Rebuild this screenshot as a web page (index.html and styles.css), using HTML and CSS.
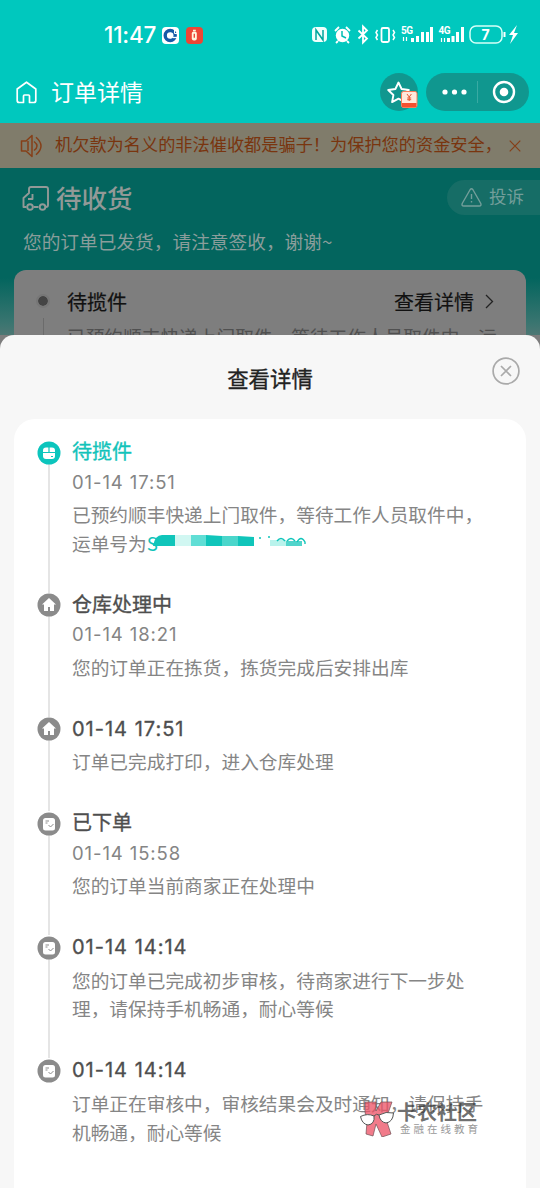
FILE: index.html
```html
<!DOCTYPE html>
<html lang="zh-CN">
<head>
<meta charset="utf-8">
<title>订单详情</title>
<link rel="stylesheet" href="styles.css">
</head>
<body>
<div class="screen">
  <header class="header">
    <div class="status">
      <span class="clock">11:47</span>
      <svg class="app-icon" width="17" height="17" viewBox="0 0 17 17"><rect width="17" height="17" rx="4" fill="#fff"/><circle cx="8.2" cy="8.5" r="5" fill="none" stroke="#175aa7" stroke-width="3.4"/><path d="M11 10.500h5" stroke="#fff" stroke-width="1.300"/><path d="M12.500 3v3.500H16" fill="none" stroke="#fff"/><path d="M8.200 5.500 11.200 8.500 8.200 11.500 5.200 8.500z" fill="#fff"/></svg>
      <svg class="app-icon" width="17" height="17" viewBox="0 0 17 17"><rect width="17" height="17" rx="4" fill="#ed4635"/><rect x="5.8" y="4.500" width="5" height="9" rx="2" fill="#fff5df"/><path d="M7 3.500h2.800" stroke="#fff5df" stroke-width="1.500"/><path d="M8.300 6.800v4" stroke="#ed4635" stroke-width="1.400"/></svg>
      <svg class="system-icons" width="210" height="24" viewBox="310 23 210 24" fill="none" stroke="#fff" stroke-width="1.800">
        <rect x="312" y="27" width="15" height="15" rx="4" fill="#effffc" stroke="none"/><path d="M316 40V30l7 10V30" stroke="#00a79d" stroke-width="1.500"/>
        <circle cx="342.500" cy="35.500" r="6.700" fill="#fff" stroke="none"/><path d="m335 31 4-4m7 0 4 4M338 41l-2 2m11-2 2 2"/><path d="M342 31v5l4 2" stroke="#00bdb3" stroke-width="1.500"/>
        <path d="m358.500 30.500 8.500 8-4 4V26.500l4 4-8.500 8" stroke-width="1.800"/>
        <rect x="381.500" y="28" width="7.500" height="14" rx="1.500"/><path d="m377.500 30-1.500 2.500 1.500 2.500-1.500 2.500 1.500 2.500m15.500-10 1.500 2.500-1.500 2.500 1.500 2.500-1.500 2.500" stroke-width="1.500"/>
        <path d="M403.500 37v4m3-4v4" stroke-width="1.200"/><path d="M412.500 38v4m5-6v6m5-10v10m5-10v10m4-15v15" stroke-width="3"/>
        <path d="M441.500 38v4m3-4v4" stroke-width="1.200"/><path d="M448.500 38v4m4.500-6v6m4.500-10v10m5-15v15" stroke-width="3"/>
        <rect x="470" y="26" width="32" height="17" rx="6" stroke="#d5fff8" stroke-width="1.500"/><path d="M504.500 32v5" stroke-width="2"/><path d="m517 25-8 10h4l-3 9 8-11h-4z" fill="#fff" stroke="none"/>
        <text x="401" y="34" class="signal">5G</text><text x="438.500" y="34" class="signal">4G</text><text x="481.500" y="40" class="battery">7</text>
      </svg>
    </div>
    <nav class="nav">
      <svg width="21" height="23" viewBox="0 0 21 23" fill="none" stroke="#fff" stroke-width="1.700" stroke-linejoin="round"><path d="M1.200 8 10.500 1.200 19.800 8v11.500q0 2-2 2H13.500V15q0-1-1-1h-4q-1 0-1 1v6.500H3.200q-2 0-2-2z"/></svg>
      <h1>订单详情</h1>
      <div class="favorite">
        <svg width="38" height="38" viewBox="380 73 38 38"><path d="m398.500 82.500 3.100 6.500 7.200 1-5.200 5 1.300 7.100-6.400-3.400-6.400 3.400 1.300-7.100-5.200-5 7.200-1z" fill="none" stroke="#fff" stroke-width="1.900" stroke-linejoin="round"/><rect x="401.500" y="91.500" width="15.500" height="16" rx="2" fill="#ffe9dc" stroke="#fa7c58"/><path d="M402 103h14.500v4H402z" fill="#f5502f"/><path d="m407 94 2.200 3 2.200-3m-2.200 3v4m-2-3h4m-4 1.700h4" fill="none" stroke="#e35632"/></svg>
      </div>
      <div class="capsule">
        <svg width="103" height="38" viewBox="0 0 103 38" fill="#fff"><circle cx="19" cy="19" r="2.600"/><circle cx="28.500" cy="19" r="2.600"/><circle cx="38" cy="19" r="2.600"/><path d="M51.500 8v22" stroke="#39aaa3"/><circle cx="78" cy="19" r="10" fill="none" stroke="#fff" stroke-width="2.400"/><circle cx="78" cy="19" r="4.300"/></svg>
      </div>
    </nav>
  </header>
  <div class="notice">
    <svg width="24" height="24" viewBox="0 0 24 24" fill="none" stroke="#853f18" stroke-width="1.500" stroke-linejoin="round"><path d="M12 1.500v21L6 17H1.500V7H6zM8 7v10M14 7.500q6 4.500 0 9M16 3.200q10 8.800 0 17.600"/></svg>
    <div class="notice-text">机欠款为名义的非法催收都是骗子！为保护您的资金安全，</div>
    <svg class="notice-close" width="12" height="12" viewBox="0 0 12 12"><path d="m.7.7 10.600 10.600M11.300.7.700 11.300" stroke="#853f18" stroke-width="1.200"/></svg>
  </div>
  <section class="hero">
    <div class="state">
      <svg width="28" height="26" viewBox="0 0 28 26" fill="none" stroke="#929997" stroke-width="1.900" stroke-linejoin="round"><path d="M4.500 22H1.500v-9L7 8V4q0-2 2-2h15q2 0 2 2v16q0 2-2 2M11.500 22h5M10.500 9v5H6"/><circle cx="8" cy="22" r="2.800"/><circle cx="20.500" cy="22" r="2.800"/></svg>
      <h2>待收货</h2>
      <div class="complaint"><svg width="21" height="19" viewBox="0 0 21 19" fill="none" stroke="#739e9a" stroke-width="1.400" stroke-linejoin="round"><path d="M9.200 1.500Q10.500 0 11.800 1.500l8 14q.8 2.500-1.500 2.500H2.700Q.4 18 1.200 15.500zM10.500 6v5m0 2v1.500"/></svg><span>投诉</span></div>
    </div>
    <p class="ship-note">您的订单已发货，请注意签收，谢谢~</p>
    <div class="summary">
      <div class="summary-head"><i class="dot"></i><b>待揽件</b><span>查看详情</span><svg width="9" height="15" viewBox="0 0 9 15"><path d="m1 1 6.500 6.500L1 14" fill="none" stroke="#222" stroke-width="1.300"/></svg></div>
      <p>已预约顺丰快递上门取件，等待工作人员取件中，运</p>
    </div>
  </section>
  <main class="sheet">
    <div class="sheet-head"><h2>查看详情</h2>
      <svg class="close" width="28" height="28" viewBox="0 0 28 28" fill="none" stroke="#aaa" stroke-width="1.700"><circle cx="14" cy="14" r="12.900"/><path d="m9 9 10 10M19 9 9 19"/></svg>
    </div>
    <div class="timeline">
      <article class="event current">
        <svg class="marker" viewBox="0 0 24 24"><circle cx="12" cy="12" r="11.500" fill="#0cc5bd"/><rect x="6" y="6.500" width="12" height="11.500" rx="3" fill="#fff"/><path d="M5 11.500h14M12 6v5.500m2 4h2" stroke="#0cc5bd" stroke-width="1.200"/></svg>
        <h3>待揽件</h3><time>01-14 17:51</time>
        <p>已预约顺丰快递上门取件，等待工作人员取件中，<br>运单号为<span class="tracking">S<svg width="160" height="20" viewBox="150 533 160 20"><path d="M153 546q2-11 9-11h13v11z" fill="#10c5ba"/><path d="M175 535h16v11h-16z" fill="#d1f7f2"/><path d="M191 535h15v11h-15z" fill="#60ded5"/><path d="m206 535 16 1v10h-16z" fill="#10c5ba"/><path d="M222 536h16v10h-16z" fill="#4bd6cb"/><path d="m238 536 16 1v9h-16z" fill="#10c5ba"/><path d="M270 540h16v6h-16z" fill="#b9f3ec"/><path d="M286 541h16v5h-16z" fill="#51d4cb"/><path d="M259 538h2m7-1h2m7 4q4-5 8 0m2 0q4-5 8 0m2 1q4-7 8 0v2" fill="none" stroke="#10c5ba" stroke-width="1.400"/></svg></span></p>
      </article>
      <article class="event"><svg class="marker" viewBox="0 0 24 24"><circle cx="12" cy="12" r="11.500" fill="#8b8b8b"/><path d="m12 5 7 6.500h-2V18h-4v-4h-2v4H7v-6.500H5z" fill="#fff"/></svg><h3>仓库处理中</h3><time>01-14 18:21</time><p>您的订单正在拣货，拣货完成后安排出库</p></article>
      <article class="event"><svg class="marker" viewBox="0 0 24 24"><circle cx="12" cy="12" r="11.500" fill="#8b8b8b"/><path d="m12 5 7 6.500h-2V18h-4v-4h-2v4H7v-6.500H5z" fill="#fff"/></svg><h3 class="date">01-14 17:51</h3><p>订单已完成打印，进入仓库处理</p></article>
      <article class="event"><svg class="marker" viewBox="0 0 24 24"><circle cx="12" cy="12" r="11.500" fill="#8b8b8b"/><rect x="6" y="6" width="12" height="12.500" rx="2.500" fill="#fff"/><path d="M8.500 9h3.500m-3.500 2h2m1 2 2 2 3-3" fill="none" stroke="#8b8b8b"/></svg><h3>已下单</h3><time>01-14 15:58</time><p>您的订单当前商家正在处理中</p></article>
      <article class="event"><svg class="marker" viewBox="0 0 24 24"><circle cx="12" cy="12" r="11.500" fill="#8b8b8b"/><rect x="6" y="6" width="12" height="12.500" rx="2.500" fill="#fff"/><path d="M8.500 9h3.500m-3.500 2h2m1 2 2 2 3-3" fill="none" stroke="#8b8b8b"/></svg><h3 class="date">01-14 14:14</h3><p>您的订单已完成初步审核，待商家进行下一步处<br>理，请保持手机畅通，耐心等候</p></article>
      <article class="event"><svg class="marker" viewBox="0 0 24 24"><circle cx="12" cy="12" r="11.500" fill="#8b8b8b"/><rect x="6" y="6" width="12" height="12.500" rx="2.500" fill="#fff"/><path d="M8.500 9h3.500m-3.500 2h2m1 2 2 2 3-3" fill="none" stroke="#8b8b8b"/></svg><h3 class="date">01-14 14:14</h3><p>订单正在审核中，审核结果会及时通知，请保持手<br>机畅通，耐心等候</p></article>
    </div>
  </main>
  <aside class="watermark">
    <svg width="34" height="36" viewBox="0 0 34 36"><path d="M5 1h11v9l5-9h11l-6 17 5 15-9 3-6-13-3 12-7-2 1-12-2-10z" fill="#ec5265" fill-opacity=".76" stroke="#705055" stroke-width=".7"/><path d="M.5 15.500q7-3.500 13.500-.5 1 8-6 9-6-1-7.500-8.500zm18.500-1.500q7-4 14.500-2-.5 9-7.500 10-6-1-7-8z" fill="#fff" stroke="#555"/><path d="M14 15q2.500-3 5-1" fill="none" stroke="#555"/></svg>
    <div><strong>卡农社区</strong><small>金融在线教育</small></div>
  </aside>
</div>
</body>
</html>
```
FILE: styles.css
```css
* { box-sizing: border-box; }
body, h1, h2, h3, p { margin: 0; }
body { font-family: "Noto Sans CJK SC", sans-serif; }
.screen { position: relative; width: 540px; height: 1188px; overflow: hidden; display: flex; flex-direction: column; background: #7d7d7d; }
.header { height: 123px; flex: none; background: #00c8be; color: #fff; }
.status { height: 70px; padding: 0 20px 0 104px; display: flex; align-items: center; }
.clock { width: 58px; font: 500 22.5px/30px Inter, sans-serif; letter-spacing: -.2px; white-space: nowrap; }
.app-icon { margin-right: 7px; }
.system-icons { margin-left: auto; }
.signal { font: 700 10px Roboto, sans-serif; fill: #fff; stroke: none; letter-spacing: -.5px; }
.battery { font: 700 14px Inter, sans-serif; fill: #fff; stroke: none; }
.nav { height: 44px; display: flex; align-items: center; padding: 0 11px 0 16px; }
.nav h1 { font-size: 23px; line-height: 34px; font-weight: 400; margin-left: 14px; padding-bottom: 3px; }
.favorite { margin-left: auto; width: 38px; height: 38px; border-radius: 19px; background: #10978f; display: flex; }
.capsule { margin-left: 8px; width: 103px; height: 38px; border-radius: 19px; background: #10978f; }
.notice { flex: none; height: 45px; background: #807c6b; display: flex; align-items: center; padding: 0 19px 0 20px; color: #79350f; }
.notice-text { width: 450px; flex: none; margin-left: 11px; font-size: 17.2px; line-height: 30px; padding-bottom: 3px; white-space: nowrap; }
.notice-close { margin-left: auto; }
.hero { flex: none; height: 167px; padding: 11px 14px 0; overflow: hidden; background: linear-gradient(#03655e 0 110px, #3a7570 155px, #637a78 180px); }
.state { height: 38px; display: flex; align-items: center; padding-left: 8px; color: #929997; }
.state h2 { margin-left: 6px; font-size: 25.5px; line-height: 36px; font-weight: 500; padding-bottom: 2px; }
.complaint { margin: -2px -14px 0 auto; width: 93px; height: 35px; border-radius: 18px 0 0 18px; background: #166d66; display: flex; align-items: center; gap: 7px; padding-left: 14px; font-size: 17.5px; color: #739e9a; }
.complaint span { padding-bottom: 3px; }
.ship-note { padding-left: 9px; margin-top: 10px; color: #8a9d9b; font-size: 18.7px; line-height: 28px; }
.summary { height: 120px; margin-top: 15px; padding: 15px 32px 0 22px; background: #7e7e7e; border-radius: 12px; color: #111; }
.summary-head { display: flex; align-items: center; height: 32px; font-size: 20px; }
.summary-head b { font-weight: 400; -webkit-text-stroke: .25px; margin-left: 17px; }
.summary-head span { margin-left: auto; margin-right: 11px; -webkit-text-stroke: .15px; }
.dot { width: 14px; height: 14px; border: 2px solid #777; border-radius: 50%; background: #444; background-clip: padding-box; }
.dot::after { content: ""; display: block; width: 1px; height: 40px; margin: 22px auto 0; background: #6b6b6b; }
.summary p { margin-left: 31px; margin-top: 5px; font-size: 18.7px; line-height: 28px; color: #505050; white-space: nowrap; }
.sheet { flex: 1; background: #f7f7f7; border-radius: 14px 14px 0 0; padding: 0 14px; box-shadow: 0 14px 0 #637a78; clip-path: none; margin-top: 0; }
.sheet-head { height: 84px; position: relative; text-align: center; padding-top: 26px; }
.sheet-head h2 { font-size: 21.4px; line-height: 34px; font-weight: 400; -webkit-text-stroke: .35px; color: #222; }
.close { position: absolute; right: 6px; top: 22px; }
.timeline { height: 769px; background: #fff; border-radius: 21px 21px 0 0; padding: 18px 20px 0 58px; }
.event { position: relative; padding-bottom: 32px; }
.event:not(:last-child)::before { content: ""; position: absolute; left: -24px; top: 26px; bottom: -3px; width: 1.5px; background: #e5e5e5; }
.marker { position: absolute; width: 24px; height: 24px; left: -35px; top: 3.5px; }
.event h3 { height: 28.7px; font-size: 20px; line-height: 28.7px; font-weight: 400; -webkit-text-stroke: .35px; color: #4e4e4e; }
.event .date { font-family: Inter, sans-serif; font-size: 20px; letter-spacing: 1px; line-height: 30px; }
.event.current h3 { color: #12c3ba; }
.event time { display: block; height: 29.6px; font: 400 18.5px/32px Inter, sans-serif; letter-spacing: .9px; color: #858585; }
.event p { margin-top: 5px; color: #858585; font-size: 18.7px; line-height: 28.7px; white-space: nowrap; }
.tracking { color: #12c3ba; position: relative; }
.tracking svg { position: absolute; left: 3px; top: 4px; }
.watermark { position: absolute; left: 360px; top: 1101px; display: flex; gap: 3px; color: rgba(48,48,48,.7); }
.watermark div { display: flex; flex-direction: column; }
.watermark strong { font-size: 20px; line-height: 21px; font-weight: 700; }
.watermark small { margin-left: 3px; font-size: 10.5px; line-height: 14px; letter-spacing: 3px; color: #999; }
```
